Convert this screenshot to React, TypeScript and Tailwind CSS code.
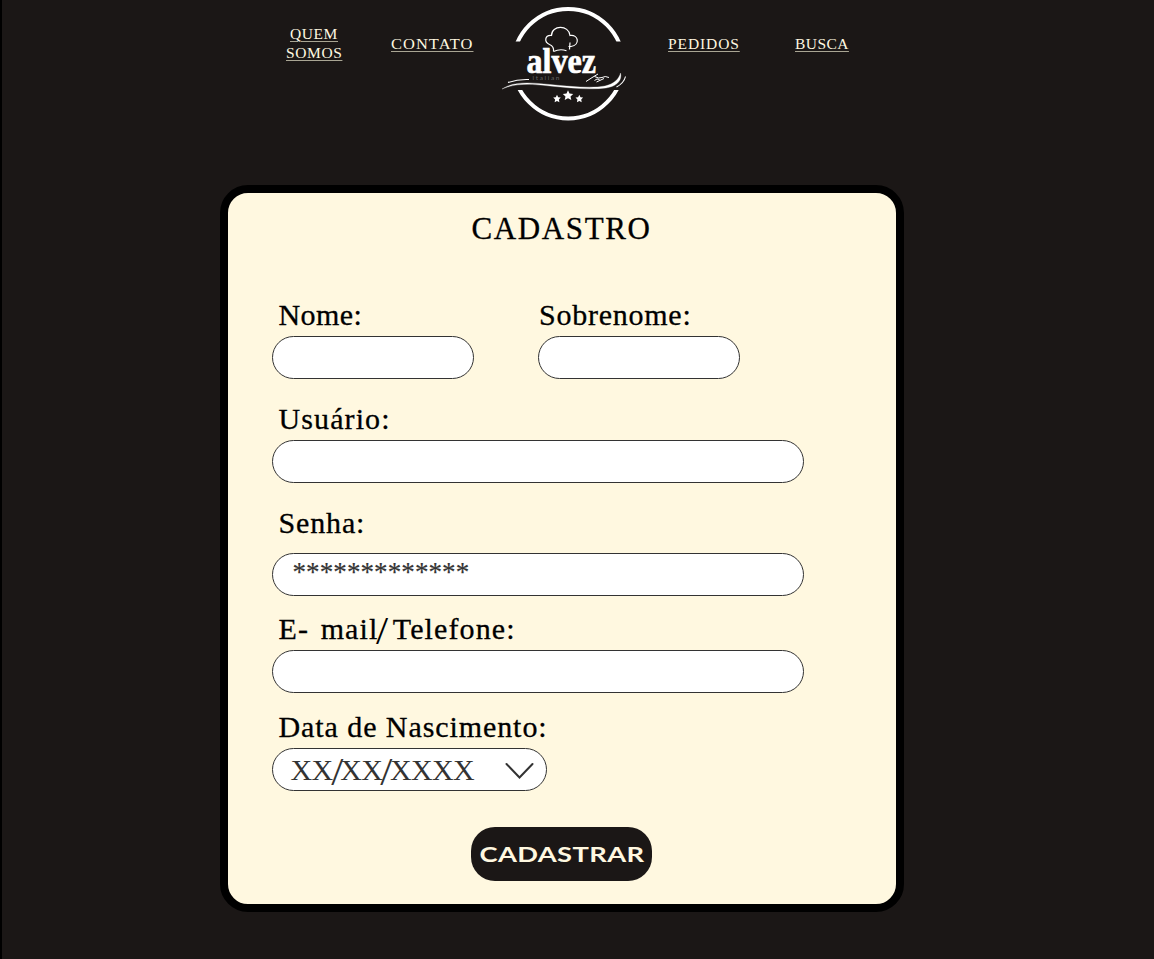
import React from "react";

const serif = "font-['Liberation_Serif',serif]";
const label = "block whitespace-pre pl-[7px] text-[30px] leading-[32px] pb-[2px] text-black [-webkit-text-stroke:0.3px_#000]";
const field = "block h-[43px] rounded-[22px] border border-[#333] bg-white outline-none";
const navLink = "underline decoration-1 decoration-[#a9a593] underline-offset-2";

function Logo() {
  return (
    <svg className="block h-[130px] w-[150px]" viewBox="0 0 150 130" fill="none" stroke="#fff">
      <clipPath id="ring">
        <path d="M0 0H150V41.500H0ZM0 90H150V130H0Z" />
      </clipPath>
      <circle cx="78.200" cy="63.700" r="54.800" strokeWidth="4" clipPath="url(#ring)" />
      <path d="M63.500 51.500C64 48 62 45.500 59.500 44.500C54 42 54.500 35 61.500 35.500C61.500 25 79 24.500 80 35.500C88.500 34 90.500 45 81 46.500L78.500 46.500M80 42.500L79.500 49.500M63.500 51.500Q70 48.500 76.500 50.700" strokeWidth="1.200" />
      <text x="36.500" y="73.300" fill="#fff" strokeWidth="0.700" fontFamily="'Liberation Serif', serif" fontWeight="700" fontSize="36" textLength="69.500" lengthAdjust="spacingAndGlyphs">alvez</text>
      <text x="42.500" y="79.500" fill="#666" stroke="none" fontFamily="Lato, sans-serif" fontSize="6.500" textLength="27" lengthAdjust="spacing">italian</text>
      <path d="M12 89C24 81 40 82.500 60 84.500C80 86.500 102 88.500 115 86C124 84 129 79 130.500 73C132.500 81 126 86.500 116 88C100 90 80 88 60 86C40 83.800 26 83 12 89Z" fill="#fff" strokeWidth="0.300" />
      <path d="M18 82.500Q28 79 39 79.500M135.500 76.500Q134 83 126.500 87" strokeWidth="1.100" />
      <path d="M96 81.500Q102 77.500 108 74M104.500 76.500Q109 79 112 77.500Q115 75.500 119 77.500M104.500 80.500Q107 78 109.500 79.500M106.500 82L114 78.500" strokeWidth="1" />
      <path d="M78 90.300l1.500 3.300 3.700.4-2.700 2.500.8 3.600-3.300-1.800-3.300 1.800.8-3.600-2.700-2.500 3.700-.4zM67 94.800l1.200 2.500 2.600.3-1.900 1.900.5 2.700-2.400-1.300-2.400 1.300.5-2.700-1.900-1.900 2.600-.3zM89.300 94.800l1.200 2.500 2.600.3-1.900 1.900.5 2.700-2.400-1.300-2.400 1.300.5-2.700-1.900-1.900 2.600-.3z" fill="#fff" stroke="none" />
    </svg>
  );
}

function Slash() {
  return <span className="inline-block origin-[50%_55%] translate-y-[2px] scale-x-[1.450] scale-y-[1.350] [-webkit-text-stroke:0]">/</span>;
}

export default function App() {
  return (
    <div className={`h-[959px] w-[1154px] overflow-hidden border-l-2 border-black bg-[#1b1716] ${serif}`}>
      <header className="flex h-[130px] pl-[284px] text-[15.500px] leading-[19px] text-[#fff8e0]">
        <a className={`${navLink} mt-[24px] w-[56px] text-center tracking-[0.600px]`}>
          QUEM SOMOS
        </a>
        <a className={`${navLink} ml-[49px] mt-[34px] w-[84px] tracking-[1px]`}>
          <span className="inline-block origin-left scale-x-[1.060] underline decoration-[#a9a593] underline-offset-2">CONTATO</span>
        </a>
        <div className="ml-[15px] w-[150px]"><Logo /></div>
        <a className={`${navLink} ml-[28px] mt-[34px] w-[72px] tracking-[0.900px]`}>PEDIDOS</a>
        <a className={`${navLink} ml-[55px] mt-[34px] tracking-[0.450px]`}>BUSCA</a>
      </header>
      <main className="ml-[217.500px] mt-[55px] h-[727px] w-[684px] rounded-[28px] border-8 border-black bg-[#fff8e0] pl-[44px]">
        <h1 className="-ml-[44px] pt-[18px] text-center text-[31px] leading-[36px] tracking-[1.600px] text-black [-webkit-text-stroke:0.300px_#000]">CADASTRO</h1>
        <form>
          <div className="mt-[52px] flex gap-[64.500px]">
            <label className="w-[202px]">
              <span className={`${label} tracking-[0.400px]`}>Nome:</span>
              <input className={`${field} mt-[3px] w-[202px]`} />
            </label>
            <label className="w-[202px]">
              <span className={`${label} -ml-[6px] tracking-[0.750px]`}>Sobrenome:</span>
              <input className={`${field} mt-[3px] w-[202px]`} />
            </label>
          </div>
          <label className="mt-[24px] block">
            <span className={`${label} tracking-[1.100px]`}>Usuário:</span>
            <input className={`${field} mt-[3px] w-[532px]`} />
          </label>
          <label className="mt-[24px] block">
            <span className={`${label} tracking-[0.850px]`}>Senha:</span>
            <span className={`${field} mt-[12px] w-[532px] pl-[20px] text-[27px] leading-[37px] tracking-[0.100px] text-[#333] [-webkit-text-stroke:0.200px_#333]`}>*************</span>
          </label>
          <label className="mt-[17px] block">
            <span className={`${label} tracking-[1.100px]`}>E- <span className="ml-[3px]">mail</span><Slash /><span className="-ml-[3px]"> Telefone:</span></span>
            <input className={`${field} mt-[3px] w-[532px]`} />
          </label>
          <label className="mt-[18px] block">
            <span className={`${label} tracking-[0.920px]`}>Data de Nascimento:</span>
            <span className={`${field} mt-[3px] flex w-[275px] items-center justify-between pl-[18px] pr-[12px] text-[30px] leading-[41px] text-[#333]`}>
              <span className="tracking-[-0.650px]">XX<Slash />XX<Slash />XXXX</span>
              <svg className="mt-[3px] h-[18px] w-[29px]" viewBox="0 0 29 18" fill="none" stroke="#333" strokeWidth="2">
                <path d="M1.500 2L14.500 15.500L27.500 2" strokeLinecap="round" />
              </svg>
            </span>
          </label>
          <button type="button" className="ml-[199.500px] mt-[36px] flex h-[54px] w-[181px] items-center justify-center rounded-[24px] bg-[#1b1716] font-['Lato',sans-serif] text-[21.500px] font-bold text-[#fff8e0]">
            <span className="inline-block scale-x-[1.270] tracking-[0.300px]">CADASTRAR</span>
          </button>
        </form>
      </main>
    </div>
  );
}
